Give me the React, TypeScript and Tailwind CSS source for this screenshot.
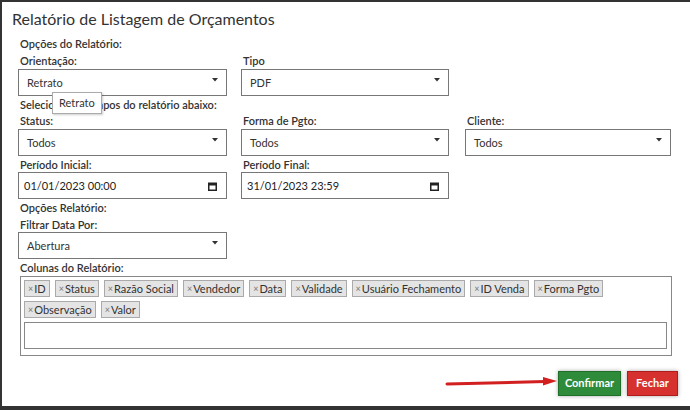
import React from "react";

const font = { fontFamily: "Lato, 'Noto Sans', sans-serif" };

function Arrow() {
  return (
    <svg width="6" height="4" viewBox="0 0 6 4" className="absolute right-[8px] top-[8px]">
      <path d="M0 0 L6 0 L3 3.5 Z" fill="#333" />
    </svg>
  );
}

function Cal() {
  return (
    <svg width="9" height="9" viewBox="0 0 9 9" className="absolute right-[9px] top-[9px]">
      <rect x="0.75" y="1.25" width="7.5" height="7" fill="none" stroke="#222" strokeWidth="1.5" />
      <rect x="0.5" y="1" width="8" height="2.5" fill="#222" />
    </svg>
  );
}

function Label({ children, h = "h-[17px]" }: { children: React.ReactNode; h?: string }) {
  return <div className={`${h} pl-[2px] text-[11px] leading-[17px] font-semibold text-[#333]`}>{children}</div>;
}

function Select({ value, w }: { value: string; w: string }) {
  return (
    <div className={`relative h-[27px] ${w} border border-[#777] bg-white pl-[8px] text-[11px] leading-[25px] text-[#333]`}>
      {value}
      <Arrow />
    </div>
  );
}

function DateBox({ value, w }: { value: string; w: string }) {
  return (
    <div className={`relative h-[27px] ${w} border border-[#777] bg-white pl-[5px] text-[11px] leading-[25px] text-[#222]`}>
      {value}
      <Cal />
    </div>
  );
}

function Chip({ t }: { t: string }) {
  return (
    <div className="flex h-[17px] items-center border border-[#aaa] bg-[#e4e4e4] pl-[3px] pr-[3px] text-[11px] leading-[15px] text-[#333]">
      <span className="mr-[1px] text-[9px] text-[#777]">×</span>
      {t}
    </div>
  );
}

export default function App() {
  const row1 = ["ID", "Status", "Razão Social", "Vendedor", "Data", "Validade", "Usuário Fechamento", "ID Venda", "Forma Pgto"];
  const row2 = ["Observação", "Valor"];
  return (
    <div className="relative h-[410px] w-[690px] overflow-hidden bg-white" style={font}>
      <div className="absolute left-0 top-0 h-[2px] w-full bg-[#333]" />
      <div className="absolute left-0 top-0 h-full w-[2px] bg-[#333]" />
      <div className="flex h-[406px] flex-col pl-[18px]">
        <div className="-ml-[6px] mt-[8px] h-[27px] text-[16px] leading-[22px] text-[#333]">Relatório de Listagem de Orçamentos</div>
        <Label>Opções do Relatório:</Label>
        <div className="flex">
          <div className="w-[223px]">
            <Label>Orientação:</Label>
            <Select value="Retrato" w="w-[209px]" />
          </div>
          <div>
            <Label>Tipo</Label>
            <Select value="PDF" w="w-[208px]" />
          </div>
        </div>
        <Label h="h-[16px]">Selecione os campos do relatório abaixo:</Label>
        <div className="flex">
          <div className="w-[223px]">
            <Label>Status:</Label>
            <Select value="Todos" w="w-[209px]" />
          </div>
          <div className="w-[224px]">
            <Label>Forma de Pgto:</Label>
            <Select value="Todos" w="w-[208px]" />
          </div>
          <div>
            <Label>Cliente:</Label>
            <Select value="Todos" w="w-[206px]" />
          </div>
        </div>
        <div className="flex">
          <div className="w-[223px]">
            <Label h="h-[16px]">Período Inicial:</Label>
            <DateBox value="01/01/2023 00:00" w="w-[209px]" />
          </div>
          <div>
            <Label h="h-[16px]">Período Final:</Label>
            <DateBox value="31/01/2023 23:59" w="w-[208px]" />
          </div>
        </div>
        <Label>Opções Relatório:</Label>
        <Label h="h-[16px]">Filtrar Data Por:</Label>
        <Select value="Abertura" w="w-[209px]" />
        <Label>Colunas do Relatório:</Label>
        <div className="ml-[2px] h-[80px] w-[652px] border border-[#888] pl-[3px] pr-[4px] pt-[3px]">
          <div className="flex gap-x-[5px]">
            {row1.map((t) => (
              <Chip key={t} t={t} />
            ))}
          </div>
          <div className="mt-[4px] flex gap-x-[5px]">
            {row2.map((t) => (
              <Chip key={t} t={t} />
            ))}
          </div>
          <div className="mt-[4px] h-[27px] w-full border border-[#888]" />
        </div>
        <div className="mt-[15px] flex justify-end gap-[6px] pr-[12px]">
          <button className="h-[25px] w-[63px] border border-[#1f6e29] bg-[#2e8b39] text-[11px] font-bold text-white shadow-[0_0_4px_rgba(0,0,0,0.35)]">
            Confirmar
          </button>
          <button className="h-[25px] w-[51px] border border-[#b01c1c] bg-[#d6302f] text-[11px] font-bold text-white shadow-[0_0_4px_rgba(0,0,0,0.35)]">
            Fechar
          </button>
        </div>
      </div>
      <div className="absolute bottom-0 left-0 h-[4px] w-full bg-[#333]" />
      <div className="absolute left-[52px] top-[92px] h-[22px] w-[50px] border border-[#aaa] bg-white pl-[6px] text-[11px] leading-[20px] text-[#333] shadow-[1px_1px_2px_rgba(0,0,0,0.2)]">
        Retrato
      </div>
      <svg className="absolute left-[445px] top-[376px]" width="114" height="12" viewBox="0 0 114 12">
        <path d="M2 8 L100 5.5" stroke="#d21f1f" strokeWidth="3" strokeLinecap="round" />
        <path d="M98 1 L112 5 L98 9.5 Z" fill="#d21f1f" />
      </svg>
    </div>
  );
}
